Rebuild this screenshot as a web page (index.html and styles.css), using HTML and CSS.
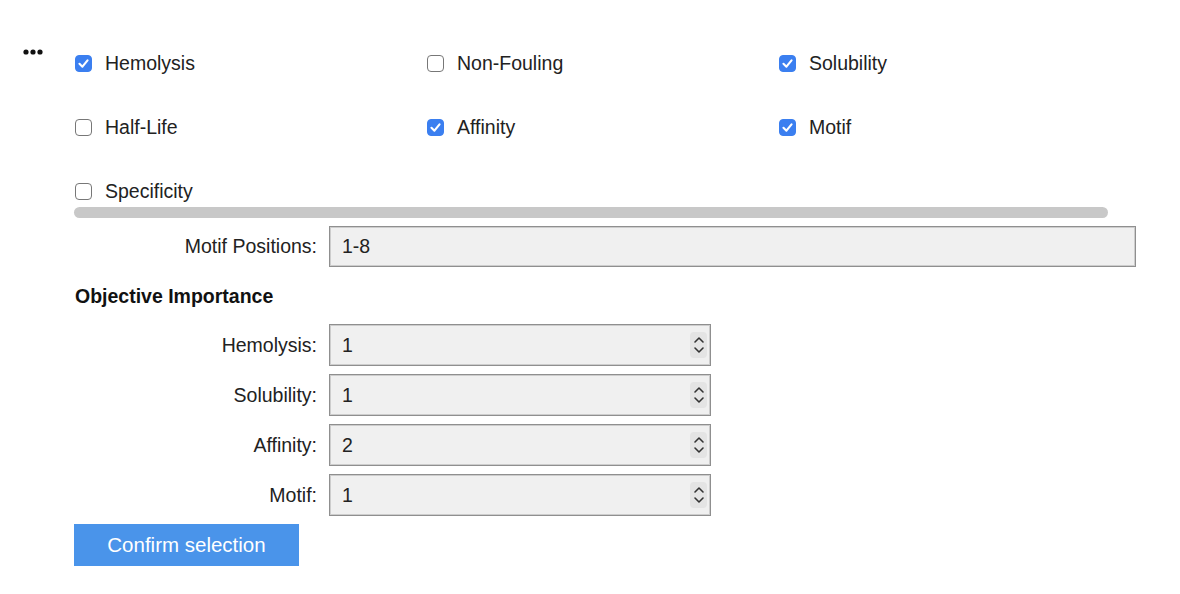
FILE: index.html
```html
<!DOCTYPE html>
<html lang="en">
<head>
    <meta charset="UTF-8">
    <meta name="viewport" content="width=device-width, initial-scale=1.0">
    <title>Objectives</title>
    <link rel="stylesheet" href="styles.css">
</head>
<body>
    <div class="layout">
        <div class="more">
            <svg width="22" height="8" viewBox="0 0 22 8"><circle cx="3" cy="4" r="2.6"/><circle cx="10" cy="4" r="2.6"/><circle cx="17" cy="4" r="2.6"/></svg>
        </div>
        <div class="panel">
            <div class="objectives">
                <label class="check"><input type="checkbox" checked> Hemolysis</label>
                <label class="check"><input type="checkbox"> Non-Fouling</label>
                <label class="check"><input type="checkbox" checked> Solubility</label>
                <label class="check"><input type="checkbox"> Half-Life</label>
                <label class="check"><input type="checkbox" checked> Affinity</label>
                <label class="check"><input type="checkbox" checked> Motif</label>
                <label class="check"><input type="checkbox"> Specificity</label>
            </div>
            <div class="scrollbar"></div>

            <div class="field">
                <label for="motifPositions">Motif Positions:</label>
                <input type="text" id="motifPositions" class="text-input wide" value="1-8">
            </div>

            <h3>Objective Importance</h3>

            <div class="field">
                <label>Hemolysis:</label>
                <div class="number-input"><span>1</span><i class="spin"><svg width="12" height="22" viewBox="0 0 12 22"><path d="M2 8 L6 4 L10 8 M2 14 L6 18 L10 14"/></svg></i></div>
            </div>
            <div class="field">
                <label>Solubility:</label>
                <div class="number-input"><span>1</span><i class="spin"><svg width="12" height="22" viewBox="0 0 12 22"><path d="M2 8 L6 4 L10 8 M2 14 L6 18 L10 14"/></svg></i></div>
            </div>
            <div class="field">
                <label>Affinity:</label>
                <div class="number-input"><span>2</span><i class="spin"><svg width="12" height="22" viewBox="0 0 12 22"><path d="M2 8 L6 4 L10 8 M2 14 L6 18 L10 14"/></svg></i></div>
            </div>
            <div class="field">
                <label>Motif:</label>
                <div class="number-input"><span>1</span><i class="spin"><svg width="12" height="22" viewBox="0 0 12 22"><path d="M2 8 L6 4 L10 8 M2 14 L6 18 L10 14"/></svg></i></div>
            </div>

            <button type="button" class="confirm">Confirm selection</button>
        </div>
    </div>
</body>
</html>
```

FILE: styles.css
```css
body {
    margin: 0;
    font-family: "Liberation Sans", Arial, sans-serif;
    font-size: 19.5px;
    color: #222;
    background: #fff;
}
.layout {
    display: flex;
}
.more {
    width: 52px;
    padding: 48px 0 0 23px;
}
.more svg {
    display: block;
    fill: #111;
}
.panel {
    width: 1061px;
}
.objectives {
    display: grid;
    grid-template-columns: 352px 352px 352px;
    grid-auto-rows: 32px;
    row-gap: 32px;
    padding-top: 47px;
}
.check {
    display: flex;
    align-items: center;
    gap: 13px;
}
.check input {
    appearance: none;
    margin: 0;
    width: 17px;
    height: 17px;
    border: 1.8px solid #777;
    border-radius: 4px;
    background: #fff;
}
.check input:checked {
    border-color: #3b7ff0;
    background: #3b7ff0 url("data:image/svg+xml;utf8,<svg xmlns='http://www.w3.org/2000/svg' viewBox='0 0 16 16'><path d='M4.2 8.3 L7 11 L11.8 5' fill='none' stroke='white' stroke-width='2' stroke-linecap='round' stroke-linejoin='round'/></svg>") center / 17px 17px no-repeat;
}
.scrollbar {
    width: 1034px;
    height: 11px;
    margin-left: -1px;
    border-radius: 6px;
    background: #c8c8c8;
}
.field {
    display: grid;
    grid-template-columns: 242px auto;
    column-gap: 12px;
    align-items: center;
    margin-top: 8px;
}
.field label {
    text-align: right;
}
.text-input,
.number-input {
    box-sizing: border-box;
    height: 42px;
    padding: 0 12px;
    font: inherit;
    color: #222;
    background: #f0f0f0;
    border: 1px solid #8f8f8f;
    box-shadow: inset 0 0 0 1px #cdcdcd;
}
.text-input.wide {
    width: 807px;
    height: 41px;
}
.number-input {
    width: 382px;
    display: flex;
    align-items: center;
    justify-content: space-between;
    padding-right: 3px;
}
.spin {
    display: flex;
    align-items: center;
    justify-content: center;
    width: 17px;
    height: 26px;
    border-radius: 4px;
    background: #e4e4e4;
}
.spin svg {
    fill: none;
    stroke: #333;
    stroke-width: 1.6;
    stroke-linecap: round;
    stroke-linejoin: round;
}
h3 {
    margin: 18px 0 16px;
    font-size: 19.5px;
    color: #111;
}
.confirm {
    display: block;
    margin: 8px 0 0 -1px;
    width: 225px;
    height: 42px;
    border: none;
    background: #4a94ea;
    color: #fff;
    font: inherit;
    font-size: 20.5px;
    cursor: pointer;
}
.confirm:hover {
    background: #3a82d6;
}
```
